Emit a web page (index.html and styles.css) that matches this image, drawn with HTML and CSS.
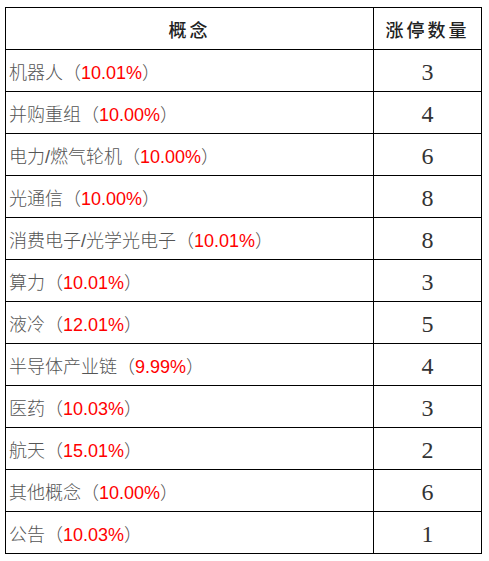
FILE: index.html
```html
<!DOCTYPE html>
<html lang="zh">
<head>
<meta charset="utf-8">
<link rel="stylesheet" href="styles.css">
</head>
<body>
<table class="board">
  <colgroup><col class="c-name"><col class="c-count"></colgroup>
  <thead>
    <tr><th class="h-name">概念</th><th class="h-count">涨停数量</th></tr>
  </thead>
  <tbody>
    <tr><td class="name">机器人（<span class="pct">10.01%</span>）</td><td class="count">3</td></tr>
    <tr><td class="name">并购重组（<span class="pct">10.00%</span>）</td><td class="count">4</td></tr>
    <tr><td class="name">电力/燃气轮机（<span class="pct">10.00%</span>）</td><td class="count">6</td></tr>
    <tr><td class="name">光通信（<span class="pct">10.00%</span>）</td><td class="count">8</td></tr>
    <tr><td class="name">消费电子/光学光电子（<span class="pct">10.01%</span>）</td><td class="count">8</td></tr>
    <tr><td class="name">算力（<span class="pct">10.01%</span>）</td><td class="count">3</td></tr>
    <tr><td class="name">液冷（<span class="pct">12.01%</span>）</td><td class="count">5</td></tr>
    <tr><td class="name">半导体产业链（<span class="pct">9.99%</span>）</td><td class="count">4</td></tr>
    <tr><td class="name">医药（<span class="pct">10.03%</span>）</td><td class="count">3</td></tr>
    <tr><td class="name">航天（<span class="pct">15.01%</span>）</td><td class="count">2</td></tr>
    <tr><td class="name">其他概念（<span class="pct">10.00%</span>）</td><td class="count">6</td></tr>
    <tr><td class="name">公告（<span class="pct">10.03%</span>）</td><td class="count">1</td></tr>
  </tbody>
</table>
</body>
</html>
```
FILE: styles.css
```css
html, body {
  margin: 0;
  padding: 0;
  background: #fff;
}
body {
  padding: 7px 0 0 5px;
}
.board {
  border-collapse: collapse;
  table-layout: fixed;
  width: 477px;
}
.c-name { width: 368px; }
.c-count { width: 108px; }
.board tr {
  height: 42px;
}
.board th,
.board td {
  border: 1px solid #000;
  padding: 0;
  vertical-align: middle;
}
.board th {
  font-family: "Noto Sans CJK SC", sans-serif;
  font-weight: 500;
  font-size: 18px;
  color: #222;
  letter-spacing: 3px;
  text-align: center;
}
.name {
  font-family: "Liberation Sans", "Noto Sans CJK SC", sans-serif;
  font-size: 18px;
  font-weight: 300;
  color: #555;
  padding-left: 3px !important;
  text-align: left;
}
.pct {
  color: #ff0000;
  font-family: "Liberation Sans", sans-serif;
  font-weight: 400;
}
.count {
  font-family: "Liberation Serif", serif;
  font-size: 24px;
  color: #333;
  text-align: center;
  padding-top: 3px !important;
}
```
